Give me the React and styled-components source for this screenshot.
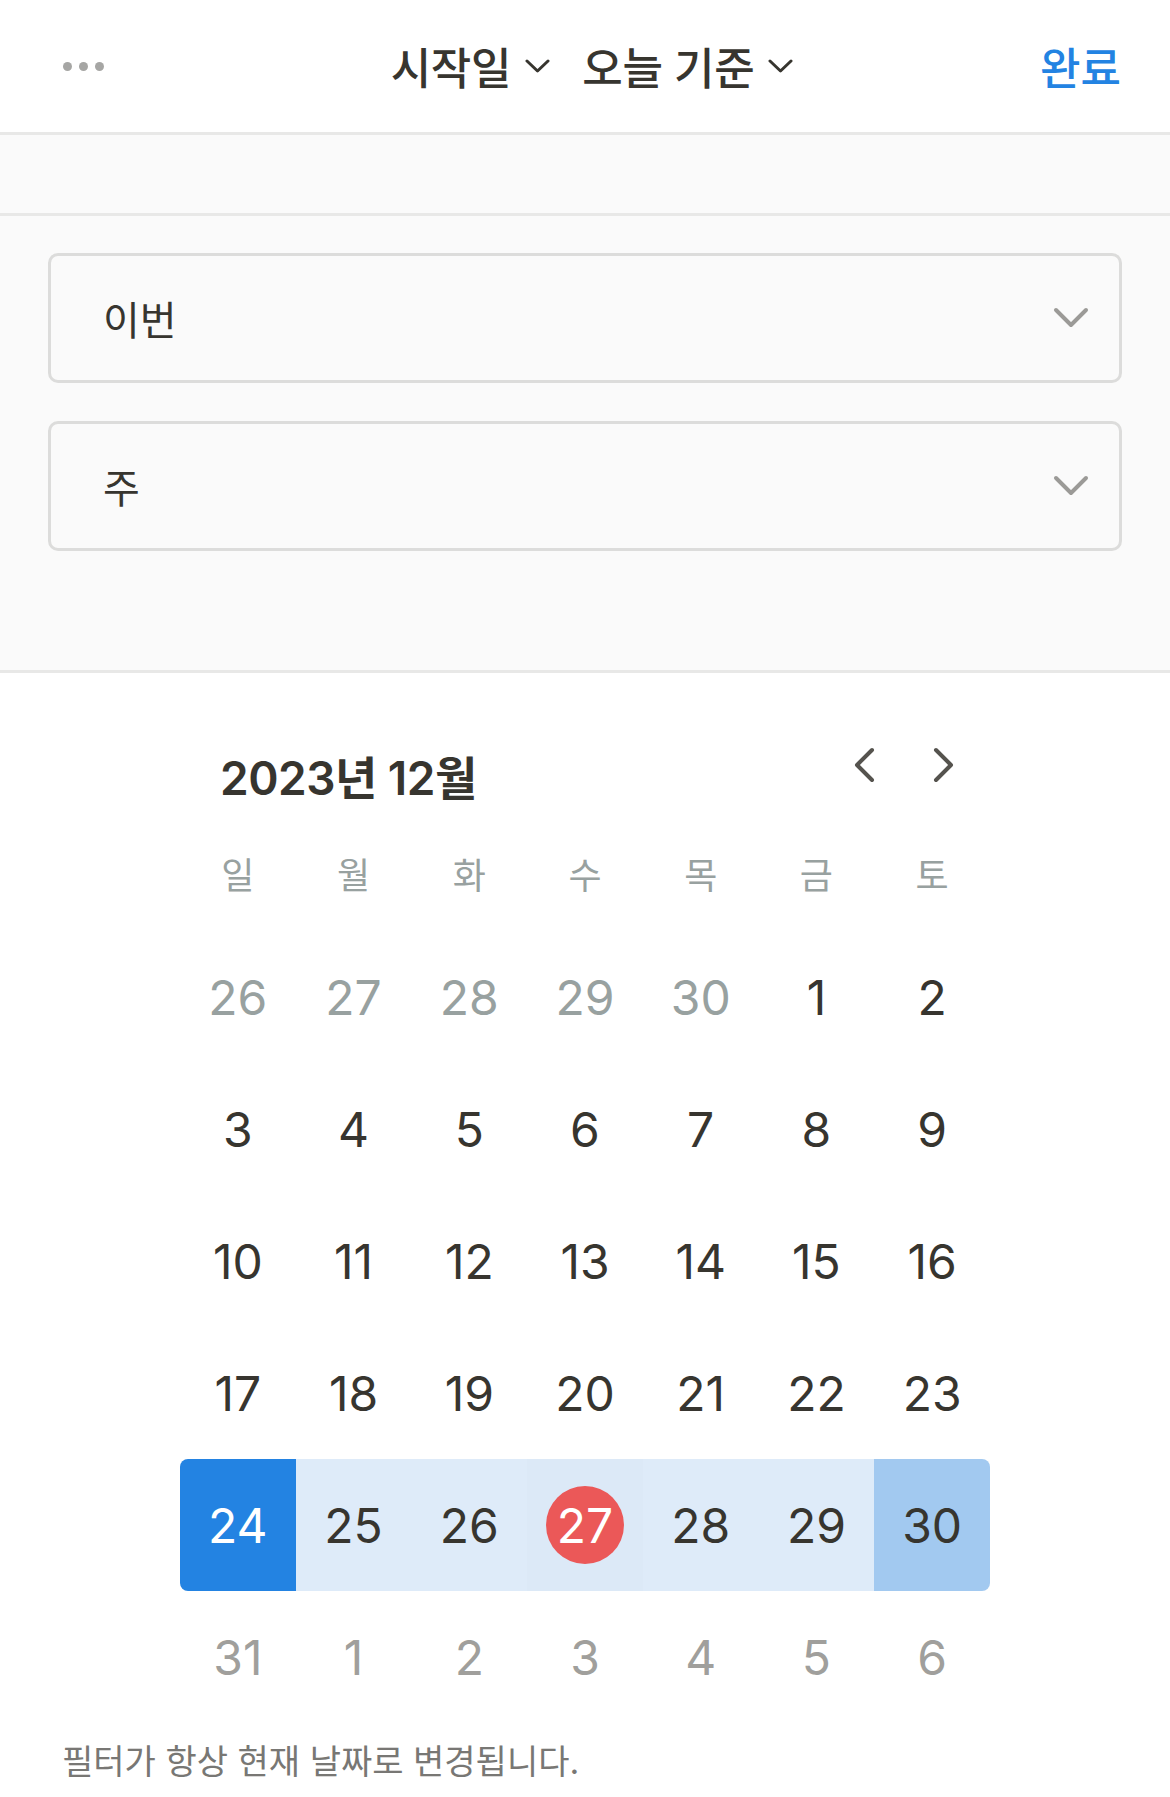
import React from 'react'
import styled, { createGlobalStyle } from 'styled-components'

const Global = createGlobalStyle`
    body {
        margin: 0;
        background: #ffffff;
        font-family: Inter, "Noto Sans CJK KR", sans-serif;
        color: #37352f;
    }
`;

const Page = styled.div`
    width: 1170px;
`;
const Header = styled.div`
    height: 132px;
    display: flex;
    align-items: center;
    padding: 0 49px 0 63px;
    border-bottom: 3px solid #e8e8e7;
`;
const Side = styled.div`
    flex: 1;
    display: flex;
    justify-content: ${p => (p.right ? 'flex-end' : 'flex-start')};
`;
const Dots = styled.div`
    display: flex;
    gap: 7px;
`;
const Dot = styled.span`
    width: 9px;
    height: 9px;
    border-radius: 50%;
    background: #a6a6a4;
`;
const TitleGroup = styled.div`
    display: flex;
    align-items: center;
    gap: 32px;
`;
const Title = styled.div`
    display: flex;
    align-items: center;
    gap: 14px;
    font-size: 44px;
    font-weight: 500;
    color: #37352f;
    letter-spacing: -0.3px;
`;
const Done = styled.div`
    font-size: 44px;
    font-weight: 500;
    color: #2383e2;
`;
const Band = styled.div`
    height: 78px;
    background: #fafafa;
    border-bottom: 3px solid #e8e8e7;
`;
const Filters = styled.div`
    background: #fafafa;
    padding: 37px 48px 119px;
    display: flex;
    flex-direction: column;
    gap: 38px;
    border-bottom: 3px solid #e8e8e7;
`;
const Select = styled.div`
    height: 124px;
    border: 3px solid #dcdcdb;
    border-radius: 10px;
    display: flex;
    align-items: center;
    justify-content: space-between;
    padding: 0 30px 0 52px;
    font-size: 40px;
    color: #37352f;
`;
const Calendar = styled.div`
    width: 810px;
    margin: 0 auto;
    padding-top: 62px;
`;
const MonthRow = styled.div`
    height: 80px;
    display: flex;
    align-items: center;
    justify-content: space-between;
    padding: 0 35px 0 40px;
`;
const MonthLabel = styled.div`
    font-size: 46px;
    font-weight: 600;
    letter-spacing: -0.5px;
`;
const Arrows = styled.div`
    display: flex;
    gap: 58px;
    margin-bottom: 20px;
`;
const Grid = styled.div`
    display: grid;
    grid-template-columns: repeat(7, 1fr);
`;
const WeekDay = styled.div`
    height: 116px;
    display: flex;
    align-items: center;
    justify-content: center;
    font-size: 36px;
    color: #98a1a0;
`;
const Day = styled.div`
    height: 132px;
    display: flex;
    align-items: center;
    justify-content: center;
    font-size: 48px;
    color: ${p => p.tone === 'prev' ? '#98a1a0' : p.tone === 'next' ? '#a09f9c' : p.tone === 'white' ? '#ffffff' : '#37352f'};
    background: ${p => p.bg || 'transparent'};
    border-radius: ${p => p.round || '0'};
`;
const Today = styled.span`
    width: 78px;
    height: 78px;
    border-radius: 50%;
    background: #eb5858;
    color: #ffffff;
    display: flex;
    align-items: center;
    justify-content: center;
`;
const Note = styled.p`
    margin: 12px 0 0 62px;
    font-size: 34px;
    color: #787774;
`;

const SmallChevron = () => (
    <svg width="25" height="14" viewBox="0 0 25 14" fill="none">
        <path d="M2 2 L12.5 12 L23 2" stroke="#37352f" strokeWidth="3" strokeLinecap="round" strokeLinejoin="round" />
    </svg>
);

const SelectChevron = () => (
    <svg width="36" height="22" viewBox="0 0 36 22" fill="none">
        <path d="M3 3 L18 18 L33 3" stroke="#9b9a97" strokeWidth="4" strokeLinecap="round" strokeLinejoin="round" />
    </svg>
);

const Arrow = ({ dir }) => (
    <svg width="22" height="36" viewBox="0 0 22 36" fill="none">
        {dir === 'left'
            ? <path d="M19 3 L4 18 L19 33" stroke="#55534e" strokeWidth="4" strokeLinecap="round" strokeLinejoin="round" />
            : <path d="M3 3 L18 18 L3 33" stroke="#55534e" strokeWidth="4" strokeLinecap="round" strokeLinejoin="round" />}
    </svg>
);

const weekDays = ['일', '월', '화', '수', '목', '금', '토'];

const rows = [
    [[26, 'prev'], [27, 'prev'], [28, 'prev'], [29, 'prev'], [30, 'prev'], [1], [2]],
    [[3], [4], [5], [6], [7], [8], [9]],
    [[10], [11], [12], [13], [14], [15], [16]],
    [[17], [18], [19], [20], [21], [22], [23]],
];
const nextRow = [31, 1, 2, 3, 4, 5, 6];

function App() {
    return (
        <Page>
            <Global />
            <Header>
                <Side>
                    <Dots><Dot /><Dot /><Dot /></Dots>
                </Side>
                <TitleGroup>
                    <Title>시작일 <SmallChevron /></Title>
                    <Title>오늘 기준 <SmallChevron /></Title>
                </TitleGroup>
                <Side right>
                    <Done>완료</Done>
                </Side>
            </Header>
            <Band />
            <Filters>
                <Select>이번 <SelectChevron /></Select>
                <Select>주 <SelectChevron /></Select>
            </Filters>
            <Calendar>
                <MonthRow>
                    <MonthLabel>2023년 12월</MonthLabel>
                    <Arrows>
                        <Arrow dir="left" />
                        <Arrow dir="right" />
                    </Arrows>
                </MonthRow>
                <Grid>
                    {weekDays.map(d => <WeekDay key={d}>{d}</WeekDay>)}
                    {rows.flat().map(([n, tone], i) => <Day key={'r' + i} tone={tone}>{n}</Day>)}
                    <Day tone="white" bg="#2383e2" round="8px 0 0 8px">24</Day>
                    <Day bg="#deebf9">25</Day>
                    <Day bg="#deebf9">26</Day>
                    <Day bg="#dce9f7"><Today>27</Today></Day>
                    <Day bg="#deebf9">28</Day>
                    <Day bg="#deebf9">29</Day>
                    <Day bg="#a2c9f0" round="0 8px 8px 0">30</Day>
                    {nextRow.map((n, i) => <Day key={'n' + i} tone="next">{n}</Day>)}
                </Grid>
            </Calendar>
            <Note>필터가 항상 현재 날짜로 변경됩니다.</Note>
        </Page>
    )
}

export default App
